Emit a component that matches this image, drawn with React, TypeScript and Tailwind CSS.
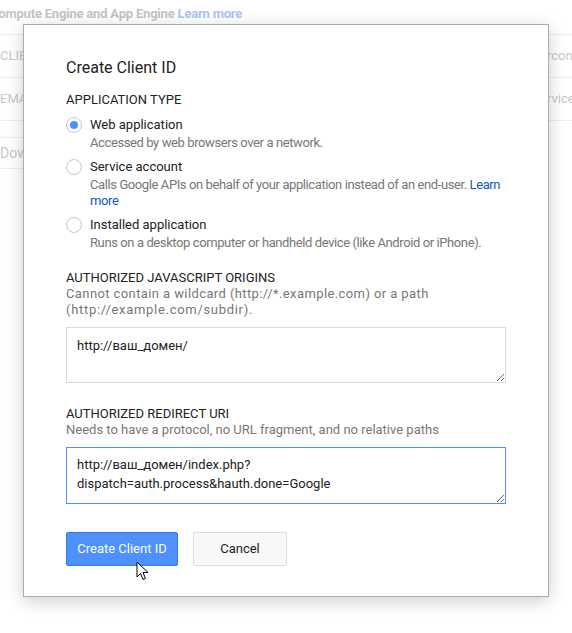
import React from "react";

const font = { fontFamily: "Roboto, 'Noto Sans', Arial, sans-serif" };

function Radio({ checked }: { checked?: boolean }) {
  return (
    <div className="mt-[1px] flex h-[16px] w-[16px] shrink-0 items-center justify-center rounded-full border border-[#c8c8c8] bg-white">
      {checked && <div className="h-[8px] w-[8px] rounded-full bg-[#4d90fe]" />}
    </div>
  );
}

function Option({
  checked,
  title,
  children,
}: {
  checked?: boolean;
  title: string;
  children: React.ReactNode;
}) {
  return (
    <div className="flex gap-[8px]">
      <Radio checked={checked} />
      <div>
        <div className="text-[13px] leading-[18px] text-[#222]">{title}</div>
        <div className="mt-[1px] text-[13px] leading-[16px] tracking-[-0.4px] text-[#777]">
          {children}
        </div>
      </div>
    </div>
  );
}

export default function App() {
  return (
    <div className="relative h-[633px] w-[572px] overflow-hidden bg-white" style={font}>
      {/* background page */}
      <div className="h-[34px] whitespace-nowrap text-[13px] font-bold leading-[28px] tracking-[-0.2px] text-[#c4c4c4]">
        <span className="-ml-[10px]">Compute Engine and App Engine </span>
        <span className="text-[#a9c4f5]">Learn more</span>
      </div>
      <div className="flex h-[43px] items-center justify-between border-t border-[#eeeeee] text-[13px] text-[#c8c8c8]">
        <span>CLIENT ID</span>
        <span className="w-[25px] overflow-hidden whitespace-nowrap">rcontent.com</span>
      </div>
      <div className="flex h-[43px] items-center justify-between border-t border-[#eeeeee] text-[13px] text-[#c8c8c8]">
        <span>EMAIL ADDRESS</span>
        <span className="w-[25px] overflow-hidden whitespace-nowrap">rviceaccount.com</span>
      </div>
      <div className="h-[17px] border-t border-[#eeeeee]" />
      <div className="flex h-[32px] w-[300px] items-center border-y border-[#eeeeee] text-[14px] text-[#c8c8c8]">
        <span>Download JSON</span>
      </div>

      {/* dialog */}
      <div className="absolute left-[23px] top-[24px] h-[573px] w-[526px] border border-[#acacac] bg-white px-[42px] pt-[33px] shadow-[0_4px_16px_rgba(0,0,0,0.2)]">
        <div className="text-[16px] leading-[20px] text-[#222]">Create Client ID</div>

        <div className="mt-[14px] text-[13px] leading-[16px] text-[#222]">APPLICATION TYPE</div>

        <div className="mt-[8px] flex flex-col gap-[7px]">
          <Option checked title="Web application">
            Accessed by web browsers over a network.
          </Option>
          <Option title="Service account">
            <span className="whitespace-nowrap">
              Calls Google APIs on behalf of your application instead of an end-user.{" "}
              <span className="text-[#15c]">Learn</span>
            </span>
            <br />
            <span className="text-[#15c]">more</span>
          </Option>
          <Option title="Installed application">
            <span className="whitespace-nowrap">
              Runs on a desktop computer or handheld device (like Android or iPhone).
            </span>
          </Option>
        </div>

        <div className="mt-[19px] text-[13px] leading-[16px] text-[#222]">
          AUTHORIZED JAVASCRIPT ORIGINS
        </div>
        <div className="text-[13px] leading-[16px] text-[#777]">
          <div className="whitespace-nowrap tracking-[0.4px]">
            Cannot contain a wildcard (http://*.example.com) or a path
          </div>
          <div className="whitespace-nowrap tracking-[0.7px]">(http://example.com/subdir).</div>
        </div>
        <textarea
          readOnly
          defaultValue="http://ваш_домен/"
          className="mt-[9px] block h-[56px] w-[440px] border border-[#d9d9d9] bg-white px-[10px] pt-[8px] text-[13px] leading-[19px] text-[#222] outline-none"
          style={font}
        />

        <div className="mt-[23px] text-[13px] leading-[16px] text-[#222]">AUTHORIZED REDIRECT URI</div>
        <div className="text-[13px] leading-[16px] text-[#777]">
          Needs to have a protocol, no URL fragment, and no relative paths
        </div>
        <textarea
          readOnly
          defaultValue={"http://ваш_домен/index.php?\ndispatch=auth.process&hauth.done=Google"}
          className="mt-[9px] block h-[57px] w-[440px] border border-[#4d90fe] bg-white px-[10px] pt-[7px] text-[13px] leading-[19px] text-[#222] outline-none"
          style={font}
        />

        <div className="mt-[28px] flex gap-[15px]">
          <button className="h-[34px] w-[112px] rounded-[2px] border border-[#3079ed] bg-[#4d90fe] text-[13px] text-white">
            Create Client ID
          </button>
          <button className="h-[34px] w-[94px] rounded-[2px] border border-[#dcdcdc] bg-[#f8f8f8] text-[13px] text-[#222]">
            Cancel
          </button>
        </div>
      </div>

      {/* mouse cursor */}
      <svg
        className="absolute left-[136px] top-[561px]"
        width="13"
        height="20"
        viewBox="0 0 13 20"
      >
        <path
          d="M1 1 L1 16 L4.5 12.5 L7 18.5 L9.5 17.5 L7 11.5 L12 11.5 Z"
          fill="white"
          stroke="black"
          strokeWidth="1"
          strokeLinejoin="round"
        />
      </svg>
    </div>
  );
}
